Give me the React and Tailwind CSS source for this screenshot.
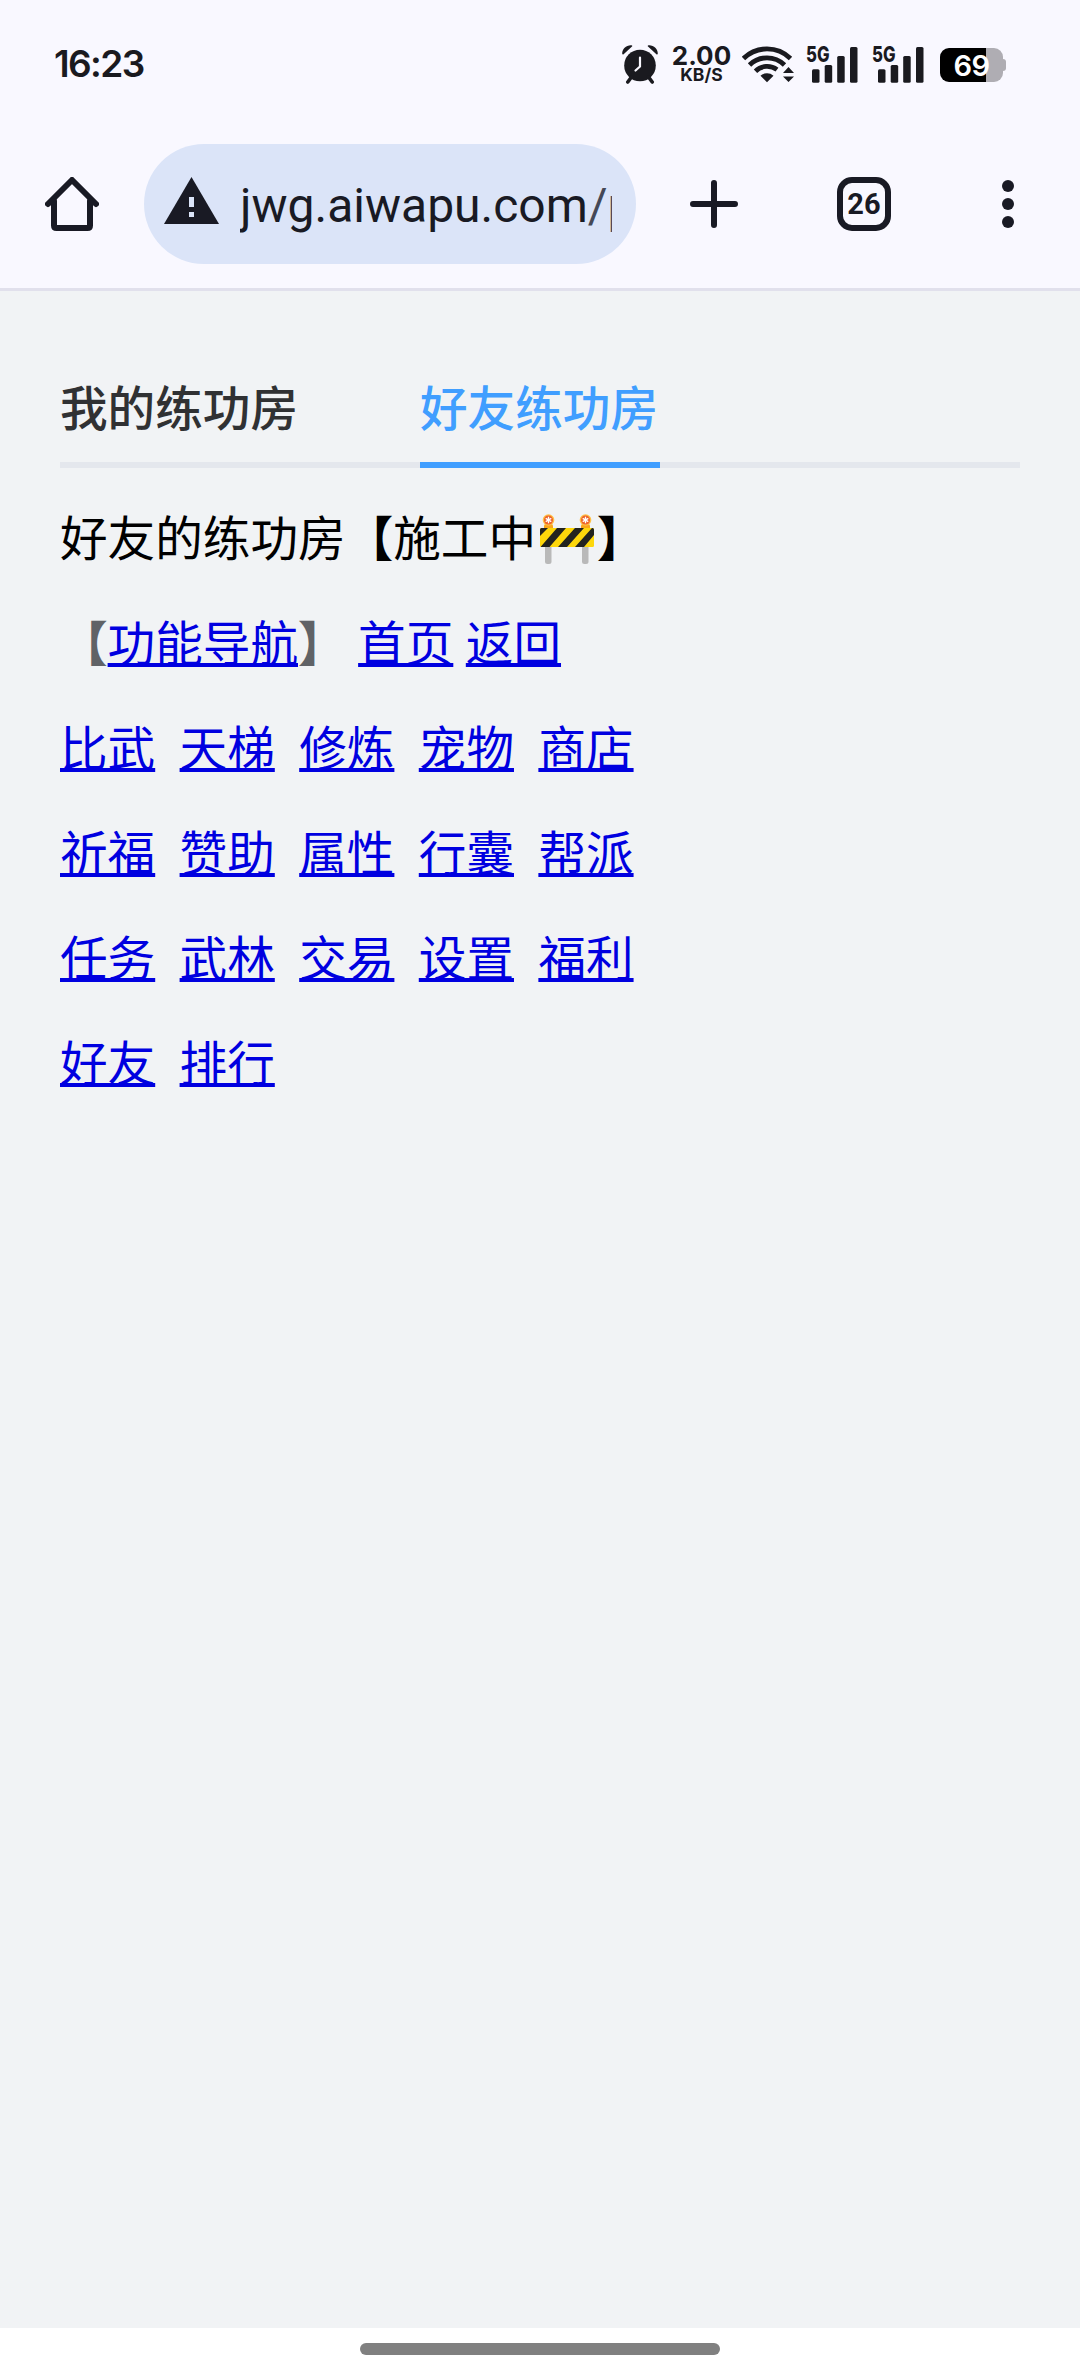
const cjk = "font-['Noto_Sans_CJK_SC',sans-serif]";

function AlarmIcon() {
  return (
    <svg width="38" height="40" viewBox="0 0 38 40" className="mt-px shrink-0">
      <circle cx="19" cy="21.5" r="15.8" fill="#1a1a1f" />
      <path d="M10.5 33 6.8 38M27.5 33l3.7 5" stroke="#1a1a1f" strokeWidth="3.6" strokeLinecap="round" />
      <path d="M1.2 9.8C1 4.500 5.500.8 10.500 1.200c.8.100 1 .8.500 1.300L2.600 10.300c-.6.500-1.300.3-1.400-.5ZM36.800 9.800C37 4.500 32.500.8 27.500 1.200c-.8.100-1 .8-.5 1.300l8.400 7.800c.6.500 1.300.3 1.400-.5Z" fill="#1a1a1f" />
      <path d="M19 13.500v9l-4.500 4" fill="none" stroke="#f9f8ff" strokeWidth="2.200" strokeLinecap="round" strokeLinejoin="round" />
    </svg>
  );
}

function WifiIcon() {
  return (
    <svg width="52" height="38" viewBox="0 0 52 38" className="shrink-0">
      <g fill="none" stroke="#1a1a1f" strokeWidth="4.800">
        <path d="M1.500 13.500a33.500 33.500 0 0 1 47 0" />
        <path d="M7.500 20a25 25 0 0 1 35 0" />
        <path d="M13.500 26.200a16.500 16.500 0 0 1 21.500-1.500" />
      </g>
      <path d="M25 37.300l-6.500-6.500c3.700-3.300 9.300-3.300 13 0Z" fill="#1a1a1f" />
      <path d="M46.500 22l5.500 6H41ZM46.500 37l5.500-5.500H41Z" fill="#1a1a1f" />
    </svg>
  );
}

function Signal() {
  return (
    <svg width="52" height="38" viewBox="0 0 52 38" className="shrink-0 overflow-visible">
      <text x="0" y="16.500" fontSize="22" fontWeight="800" textLength="23.500" lengthAdjust="spacingAndGlyphs" fill="#1a1a1f" fontFamily="Inter, sans-serif">5G</text>
      <g fill="#1a1a1f">
        <rect x="6" y="24.300" width="7.500" height="13.500" rx="1.500" />
        <rect x="18.700" y="20" width="7.500" height="17.800" rx="1.500" />
        <rect x="31.200" y="11" width="7.500" height="26.800" rx="1.500" />
        <rect x="44" y="2" width="7.500" height="35.800" rx="1.500" />
      </g>
    </svg>
  );
}

function Battery() {
  return (
    <div className="flex h-[34px] items-center">
      <div className="flex h-[34px] w-[63px] items-center justify-center rounded-[9px] bg-[linear-gradient(to_right,#000_46px,#afadb3_46px)] font-[Inter,sans-serif] text-[29px] leading-none font-semibold tracking-[-0.5px] text-white">
        69
      </div>
      <div className="h-3 w-[3px] rounded-r-[3px] bg-[#afadb3]" />
    </div>
  );
}

function StatusBar() {
  return (
    <div className="flex h-[127px] items-center pl-[54px] font-[Inter,sans-serif] text-[#1a1a1f]">
      <div className="w-[567px] text-[37px] leading-none font-semibold tracking-[-1.6px]">16:23</div>
      <AlarmIcon />
      <div className="mt-[3px] ml-[13px] flex w-[59px] flex-col items-center">
        <span className="text-[26px] leading-[20px] font-bold">2.00</span>
        <span className="text-[17.5px] leading-[18px] font-bold">KB/S</span>
      </div>
      <div className="ml-[11px] flex items-center">
        <WifiIcon />
        <div className="ml-3 flex gap-[14px]">
          <Signal />
          <Signal />
        </div>
      </div>
      <div className="ml-4 mt-[3px]">
        <Battery />
      </div>
    </div>
  );
}

function Toolbar() {
  return (
    <div className="flex h-[154px] items-center pl-[45px] text-[#191a24]">
      <svg width="54" height="54" viewBox="0 0 54 54" fill="none" stroke="#191a24" strokeWidth="6" strokeLinecap="round" strokeLinejoin="round" className="shrink-0">
        <path d="M3 27 27 3l24 24" />
        <path d="M9 24v24.500q0 2.500 2.500 2.500h31q2.500 0 2.500-2.500V24" />
      </svg>
      <div className="ml-[45px] flex h-[120px] w-[492px] shrink-0 items-center rounded-full bg-[#dbe4f8] pl-5">
        <svg width="55" height="47" viewBox="0 0 55 47" className="mb-[7px] shrink-0">
          <path d="M27.500 0 55 47H0Z" fill="#191a24" />
          <path d="M25 20h5v10h-5ZM25 35h5v5h-5Z" fill="#dbe4f8" />
        </svg>
        <div className="mt-[3px] ml-[21px] w-[372px] overflow-hidden font-[Roboto,sans-serif] text-[48px] leading-[60px] whitespace-nowrap">
          jwg.aiwapu.com<span className="text-[#454856]">/p</span>
        </div>
      </div>
      <svg width="48" height="48" viewBox="0 0 48 48" stroke="#191a24" strokeWidth="6" strokeLinecap="round" className="ml-[54px] shrink-0">
        <path d="M24 3v42M3 24h42" />
      </svg>
      <div className="ml-[99px] flex h-[54px] w-[54px] shrink-0 items-center justify-center rounded-[15px] border-[6px] border-[#191a24] font-[Roboto,sans-serif] text-[29px] leading-none font-bold">
        26
      </div>
      <div className="ml-[111px] flex flex-col gap-[6px]">
        <i className="size-3 rounded-full bg-[#191a24]" />
        <i className="size-3 rounded-full bg-[#191a24]" />
        <i className="size-3 rounded-full bg-[#191a24]" />
      </div>
    </div>
  );
}

function Barrier() {
  return (
    <svg width="54" height="50" viewBox="0 0 54 50" className="mr-[3px] ml-[4px] mt-[7px] shrink-0">
      <rect x="5" y="31" width="6.500" height="19" rx="2.500" fill="#b9b9b9" />
      <rect x="42" y="31" width="6.500" height="19" rx="2.500" fill="#b9b9b9" />
      <path d="M4 15v-3q0-2 2-2h5q2 0 2 2v3ZM41 15v-3q0-2 2-2h5q2 0 2 2v3Z" fill="#f9a61a" />
      <circle cx="8.500" cy="6" r="5.800" fill="#ffc045" />
      <circle cx="8.500" cy="6" r="4.500" fill="#ee6228" />
      <path d="M8.500 2.800v6.400M5.700 4.400l5.600 3.200M11.300 4.400 5.700 7.600" stroke="#fff" strokeWidth="1.300" />
      <circle cx="45.500" cy="6" r="5.800" fill="#ffc045" />
      <circle cx="45.500" cy="6" r="4.500" fill="#ee6228" />
      <path d="M45.500 2.800v6.400M42.700 4.400l5.600 3.200M48.300 4.400l-5.600 3.200" stroke="#fff" strokeWidth="1.300" />
      <clipPath id="board"><rect x="0" y="14" width="54" height="19" rx="1.500" /></clipPath>
      <g clipPath="url(#board)">
        <rect y="14" width="54" height="19" fill="#fdd70b" />
        <path d="M0 14h8L0 22ZM17 14h9L9.500 33H.5ZM35 14h9L27 33h-9ZM54 14v7L44 33h-9L52 14Z" fill="#22231f" />
      </g>
    </svg>
  );
}

function NavLink({ children }) {
  return (
    <a href="#" className="text-[#0000e0] underline decoration-[4px] underline-offset-[2px] [text-decoration-skip-ink:none]">
      {children}
    </a>
  );
}

function Bracket({ children }) {
  return <span className="font-black">{children}</span>;
}

const rows = [
  ["比武", "天梯", "修炼", "宠物", "商店"],
  ["祈福", "赞助", "属性", "行囊", "帮派"],
  ["任务", "武林", "交易", "设置", "福利"],
  ["好友", "排行"],
];

export default function App() {
  return (
    <div className="flex h-[2376px] w-[1080px] flex-col overflow-hidden bg-[#f1f3f5]">
      <header className="h-[291px] shrink-0 border-b-[3px] border-[#e1e0ec] bg-[#f9f8ff]">
        <StatusBar />
        <Toolbar />
      </header>
      <main className={`flex-1 px-[60px] text-[47.6px] leading-[60px] whitespace-nowrap ${cjk}`}>
        <div className="mt-[60px] flex h-[117px] gap-[120px] bg-[linear-gradient(to_top,#e4e7ed_6px,transparent_6px)] font-medium">
          <div className="flex h-full w-60 items-center pb-[7px] text-[#303133]">我的练功房</div>
          <div className="flex h-full w-60 items-center border-b-[6px] border-[#409eff] pb-px text-[#409eff]">好友练功房</div>
        </div>
        <div className="mt-[15px] flex h-[105px] items-center text-black">
          好友的练功房<Bracket>【</Bracket>施工中
          <Barrier />
          <Bracket>】</Bracket>
        </div>
        <div className="flex h-[105px] items-center text-[#606266]">
          <Bracket>【</Bracket>
          <NavLink>功能导航</NavLink>
          <Bracket>】</Bracket>
          <div className="ml-[12.5px] flex gap-[12.5px]">
            <NavLink>首页</NavLink>
            <NavLink>返回</NavLink>
          </div>
        </div>
        {rows.map((row) => (
          <div key={row[0]} className="flex h-[105px] items-center gap-[24.4px]">
            {row.map((label) => (
              <NavLink key={label}>{label}</NavLink>
            ))}
          </div>
        ))}
      </main>
      <footer className="flex h-12 shrink-0 justify-center bg-white pt-[15px]">
        <div className="h-3 w-[360px] rounded-full bg-[#808080]" />
      </footer>
    </div>
  );
}
